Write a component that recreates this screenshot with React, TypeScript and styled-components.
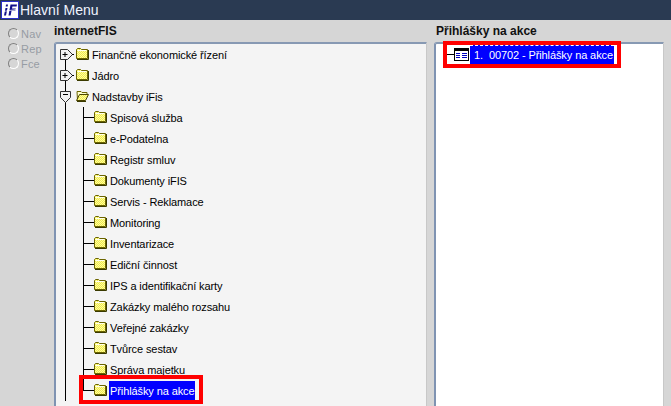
import React from 'react';
import styled, { createGlobalStyle } from 'styled-components';

const GlobalStyle = createGlobalStyle`
  html, body {
    margin: 0;
    padding: 0;
    background: #d6d6d6;
    overflow: hidden;
  }
  body {
    font-family: "Liberation Sans", Arial, sans-serif;
  }
`

const rootFolders = [
    { label: 'Finančně ekonomické řízení', open: false },
    { label: 'Jádro', open: false },
    { label: 'Nadstavby iFis', open: true },
]
const childFolders = [
    'Spisová služba',
    'e-Podatelna',
    'Registr smluv',
    'Dokumenty iFIS',
    'Servis - Reklamace',
    'Monitoring',
    'Inventarizace',
    'Ediční činnost',
    'IPS a identifikační karty',
    'Zakázky malého rozsahu',
    'Veřejné zakázky',
    'Tvůrce sestav',
    'Správa majetku',
]

const App: React.FC = () => {
    return (
        <Window>
            <GlobalStyle />
            <TitleBar>
                <AppLogo />
                <TitleText>Hlavní Menu</TitleText>
            </TitleBar>
            <Content>
                <Rail>
                    {['Nav', 'Rep', 'Fce'].map((name) => (
                        <RadioRow key={name}>
                            <RadioDot />
                            <span>{name}</span>
                        </RadioRow>
                    ))}
                </Rail>
                <Column $width={380}>
                    <Heading>internetFIS</Heading>
                    <Panel $bg="#f4f4f4">
                        <Tree>
                            {rootFolders.map((item, index) => (
                                <Row key={item.label}>
                                    <Toggle open={item.open} first={index === 0} />
                                    <Folder open={item.open} />
                                    <Label>{item.label}</Label>
                                </Row>
                            ))}
                            <Children>
                                {childFolders.map((label) => (
                                    <Row key={label}>
                                        <Branch width={11} stem="full" />
                                        <Folder />
                                        <Label>{label}</Label>
                                    </Row>
                                ))}
                                <Row>
                                    <Branch width={11} stem="half" />
                                    <Folder />
                                    <SelectedLabel>Přihlášky na akce</SelectedLabel>
                                    <LeftMarker />
                                </Row>
                            </Children>
                        </Tree>
                    </Panel>
                </Column>
                <Column $width={237}>
                    <Heading $indent={2}>Přihlášky na akce</Heading>
                    <Panel $bg="#ffffff">
                        <LeafRow>
                            <Branch width={8} />
                            <FormIcon />
                            <FocusedLabel>1.&nbsp; 00702 - Přihlášky na akce</FocusedLabel>
                            <RightMarker />
                        </LeafRow>
                    </Panel>
                </Column>
            </Content>
        </Window>
    )
}

const AppLogo = () => (
    <svg width="18" height="18" viewBox="0 0 18 18" style={{ flex: 'none' }}>
        <rect x="0.500" y="0.500" width="17" height="17" fill="#ffffff" stroke="#2a30c8" />
        <path d="M4.500 7h2L5 14.500H3z M5 3.500h2L6.700 5.500H4.700z" fill="#10108a" />
        <path d="M9.500 3.500H16l-.4 2h-4.200l-.4 2h3.800l-.4 2h-3.800l-1 5H7.500z" fill="#10108a" />
        <path d="M2 10.500L15 8.500" stroke="#ffffff" strokeWidth="0.7" />
    </svg>
)

const Toggle = ({ open, first }: { open: boolean; first?: boolean }) => (
    <svg width="17" height="21" viewBox="0 0 17 21" style={{ flex: 'none' }}>
        <path d={first ? 'M6.500 5V21' : 'M6.500 0V21'} stroke="#000" fill="none" />
        {open ? (
            <>
                <path d="M1.500 5.500h10v6l-5 5-5-5z" fill="#f4f4f4" stroke="#333" />
                <path d="M4 8.500h5" stroke="#000" />
            </>
        ) : (
            <>
                <path d="M1.500 5.500h7l5 5-5 5h-7z" fill="#f4f4f4" stroke="#333" />
                <path d="M3.500 10.500h5M6 8v5" stroke="#000" />
                <path d="M13 10.500h2" stroke="#000" />
            </>
        )}
    </svg>
)

const Folder = ({ open }: { open?: boolean }) => (
    <svg width="13" height="13" viewBox="0 0 13 13" style={{ flex: 'none' }}>
        <defs>
            <pattern id="dither" width="2" height="2" patternUnits="userSpaceOnUse">
                <rect width="2" height="2" fill="#ffff99" />
                <rect width="1" height="1" fill="#f0e850" />
                <rect x="1" y="1" width="1" height="1" fill="#f0e850" />
            </pattern>
        </defs>
        {open ? (
            <>
                <path d="M1 1.500h4l1 1h5v2H4.500L1.500 10z" fill="#ffffcc" stroke="#6b6400" />
                <path d="M3.500 4.500H12.500L9.500 10.500H0.500z" fill="url(#dither)" stroke="#4a4400" />
                <path d="M1 11.500H10" stroke="#3a3a00" />
            </>
        ) : (
            <>
                <path d="M0.500 1.500L1.500 0.500H4.500L5.500 1.500H11.500V10.500H0.500z" fill="url(#dither)" stroke="#6b6400" />
                <path d="M1.500 2.500H10.500" stroke="#fffff0" />
                <path d="M1 11.500H12.500V2" stroke="#3a3a00" fill="none" />
            </>
        )}
    </svg>
)

const Branch = ({ width, stem }: { width: number; stem?: 'full' | 'half' }) => (
    <svg width={width} height="21" viewBox={`0 0 ${width} 21`} style={{ flex: 'none' }}>
        <path d={`M0 10.500H${width}`} stroke="#000" />
        {stem && <path d={stem === 'full' ? 'M0.500 0V21' : 'M0.500 0V11'} stroke="#000" />}
    </svg>
)

const FormIcon = () => (
    <svg width="15" height="13" viewBox="0 0 15 13" style={{ flex: 'none' }}>
        <rect x="0.500" y="0.500" width="14" height="12" fill="#ffffff" stroke="#000" />
        <rect x="0" y="0" width="15" height="3" fill="#000" />
        <path d="M2 5.500h4M2 7.500h4M2 9.500h4M8 5.500h5M8 7.500h5M8 9.500h5" stroke="#0000c0" />
    </svg>
)

const Window = styled.div`
  width: 671px;
  height: 406px;
  overflow: hidden;
  display: flex;
  flex-direction: column;
`
const TitleBar = styled.div`
  height: 20px;
  flex: none;
  display: flex;
  align-items: center;
  gap: 1px;
  padding-left: 1px;
  background: #2a3a52;
`
const TitleText = styled.div`
  color: #f0f4ff;
  font-size: 14px;
  line-height: 20px;
`
const Content = styled.div`
  flex: 1;
  min-height: 0;
  display: flex;
  background: #d6d6d6;
`
const Rail = styled.div`
  width: 54px;
  flex: none;
  display: flex;
  flex-direction: column;
  gap: 1px;
  padding: 7px 0 0 8px;
  box-sizing: border-box;
`
const RadioRow = styled.div`
  height: 14px;
  display: flex;
  align-items: center;
  gap: 2px;
  font-size: 11px;
  letter-spacing: 0.2px;
  color: #969ca4;
`
const RadioDot = styled.span`
  width: 9px;
  height: 9px;
  margin-top: -2px;
  border-radius: 50%;
  border: 1px solid #808080;
  border-right-color: #ffffff;
  border-bottom-color: #ffffff;
  flex: none;
`
const Column = styled.div<{ $width: number }>`
  width: ${(p) => p.$width}px;
  flex: none;
  display: flex;
  flex-direction: column;
`
const Heading = styled.div<{ $indent?: number }>`
  height: 22px;
  box-sizing: border-box;
  padding: 4px 0 0 ${(p) => p.$indent ?? 0}px;
  font-size: 12px;
  line-height: 15px;
  font-weight: bold;
  color: #111111;
`
const Panel = styled.div<{ $bg: string }>`
  flex: 1;
  min-height: 0;
  background: ${(p) => p.$bg};
  border: 1px solid #c8c8c8;
  border-left: 2px solid #7f93b2;
  border-top: 2px solid #8799b3;
  border-bottom: none;
  border-top-left-radius: 3px;
  box-sizing: border-box;
  margin-right: 7px;
`
const Tree = styled.div`
  display: flex;
  flex-direction: column;
  padding-left: 3px;
`
const Children = styled.div`
  margin-left: 6px;
  border-left: 1px solid #000;
  padding-left: 17px;
`
const Row = styled.div`
  position: relative;
  height: 21px;
  display: flex;
  align-items: center;
  white-space: nowrap;
`
const LeafRow = styled(Row)`
  margin-left: 10px;
`
const Label = styled.span`
  margin-left: 1px;
  padding: 0 2px;
  font-size: 11px;
  letter-spacing: -0.1px;
  line-height: 20px;
  height: 20px;
  box-sizing: border-box;
  color: #000000;
`
const SelectedLabel = styled(Label)`
  margin-left: 2px;
  padding: 0 0 0 1px;
  color: #ffffff;
  background: #0000ff;
`
const FocusedLabel = styled(Label)`
  padding: 0 1px 0 4px;
  line-height: 18px;
  color: #ffffff;
  background: #0000ff;
  border-top: 1px dashed #ffffff;
  border-bottom: 1px dashed #ffffff;
`
const LeftMarker = styled.div`
  position: absolute;
  left: -4px;
  top: -5px;
  width: 116px;
  height: 21px;
  border: 4px solid #ff0000;
`
const RightMarker = styled.div`
  position: absolute;
  left: -3px;
  top: -3px;
  width: 170px;
  height: 19px;
  border: 4px solid #ff0000;
`

export default App
